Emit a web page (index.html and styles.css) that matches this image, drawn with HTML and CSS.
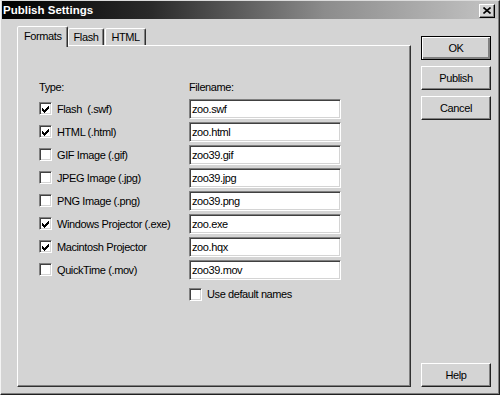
FILE: index.html
```html
<!DOCTYPE html>
<html>
<head>
<meta charset="utf-8">
<title>Publish Settings</title>
<link rel="stylesheet" href="styles.css">
</head>
<body>
<div class="window">
  <div class="titlebar">
    <span class="title">Publish Settings</span>
    <span class="close"><svg width="8" height="7" viewBox="0 0 8 7"><path d="M0.5 0.5 L7.5 6.5 M7.5 0.5 L0.5 6.5" stroke="#000" stroke-width="1.6" fill="none"/></svg></span>
  </div>
  <div class="content">
    <div class="tabs-area">
      <div class="tabstrip">
        <div class="tab active">Formats</div>
        <div class="tab">Flash</div>
        <div class="tab">HTML</div>
      </div>
      <div class="panel">
        <div class="grid">
          <div class="head">Type:</div>
          <div class="head">Filename:</div>

          <div class="opt"><span class="cb checked"></span><span>Flash&nbsp; (.swf)</span></div>
          <div class="field">zoo.swf</div>

          <div class="opt"><span class="cb checked"></span><span>HTML (.html)</span></div>
          <div class="field">zoo.html</div>

          <div class="opt"><span class="cb"></span><span>GIF Image (.gif)</span></div>
          <div class="field">zoo39.gif</div>

          <div class="opt"><span class="cb"></span><span>JPEG Image (.jpg)</span></div>
          <div class="field">zoo39.jpg</div>

          <div class="opt"><span class="cb"></span><span>PNG Image (.png)</span></div>
          <div class="field">zoo39.png</div>

          <div class="opt"><span class="cb checked"></span><span>Windows Projector (.exe)</span></div>
          <div class="field">zoo.exe</div>

          <div class="opt"><span class="cb checked"></span><span>Macintosh Projector</span></div>
          <div class="field">zoo.hqx</div>

          <div class="opt"><span class="cb"></span><span>QuickTime (.mov)</span></div>
          <div class="field">zoo39.mov</div>

          <div class="spacer"></div>
          <div class="opt default-names"><span class="cb"></span><span>Use default names</span></div>
        </div>
      </div>
    </div>
    <div class="buttons">
      <div class="btn default">OK</div>
      <div class="btn">Publish</div>
      <div class="btn">Cancel</div>
      <div class="btn help">Help</div>
    </div>
  </div>
</div>
</body>
</html>
```
FILE: styles.css
```css
* { box-sizing: border-box; }
html, body { margin: 0; padding: 0; background: #d4d4d4; }
body {
  font-family: "Liberation Sans", Arial, sans-serif;
  font-size: 11px;
  letter-spacing: -0.4px;
  color: #000;
}
.window {
  width: 500px;
  height: 395px;
  background: #d4d4d4;
  border: 1px solid;
  border-color: #dcdcdc #202020 #202020 #f4f4f4;
  box-shadow: inset -1px -1px #808080;
  display: flex;
  flex-direction: column;
}
.titlebar {
  height: 18px;
  margin: 0 1px 0 1px;
  background: linear-gradient(to right, #000 0%, #2a2a2a 30%, #8c8c8c 65%, #c4c4c4 100%);
  display: flex;
  align-items: center;
  justify-content: space-between;
  padding: 0 3px 0 1px;
}
.title {
  color: #fff;
  font-weight: bold;
  font-size: 11.5px;
  letter-spacing: 0;
}
.close {
  width: 16px;
  height: 14px;
  background: #d4d4d4;
  border: 1px solid;
  border-color: #fff #000 #000 #fff;
  box-shadow: inset -1px -1px #808080;
  display: flex;
  align-items: center;
  justify-content: center;
  margin-top: 1px;
}
.content {
  flex: 1;
  display: flex;
  padding: 7px 7px 7px 16px;
}
.tabs-area {
  width: 394px;
  display: flex;
  flex-direction: column;
}
.tabstrip {
  display: flex;
  align-items: flex-end;
  height: 19px;
  padding-left: 2px;
  position: relative;
  z-index: 1;
}
.tab {
  height: 17px;
  padding: 2px 5px 0 5px;
  border: 1px solid;
  border-bottom: none;
  border-color: #fff #303030 transparent #fff;
  border-radius: 2px 2px 0 0;
  box-shadow: inset -1px 0 #808080;
  background: #d4d4d4;
  line-height: 13px;
}
.tab.active {
  height: 21px;
  margin: 0 -1px -2px -2px;
  padding: 3px 5px 0 6px;
}
.tab + .tab { margin-left: 1px; }
.tab.active + .tab { margin-left: 1px; }
.panel {
  flex: 1;
  border: 1px solid;
  border-color: #fff #303030 #303030 #fff;
  box-shadow: inset -1px -1px #808080;
  padding: 35px 0 0 21px;
}
.grid {
  display: grid;
  grid-template-columns: 150px 152px;
  grid-template-rows: 16px;
  grid-auto-rows: 23px;
  align-items: center;
}
.head {
  align-self: start;
  line-height: 13px;
  height: 16px;
}
.opt {
  display: flex;
  align-items: center;
  gap: 5px;
  white-space: nowrap;
}
.cb {
  width: 13px;
  height: 13px;
  flex: none;
  background: #fff;
  border: 1px solid;
  border-color: #808080 #fff #fff #808080;
  box-shadow: inset 1px 1px #404040, inset -1px -1px #d4d4d4;
  position: relative;
}
.cb.checked::after {
  content: "";
  position: absolute;
  left: 2px;
  top: 3px;
  width: 7px;
  height: 7px;
  background: url("data:image/svg+xml;utf8,<svg xmlns='http://www.w3.org/2000/svg' width='7' height='7'><path d='M0 2h1v1h1v1h1v-1h1v-1h1v-1h1v-1h1v3h-1v1h-1v1h-1v1h-1v1h-1v-1h-1v-1h-1v-1h-1z' fill='black'/></svg>") no-repeat;
}
.field {
  height: 20px;
  background: #fff;
  border: 1px solid;
  border-color: #808080 #fff #fff #808080;
  box-shadow: inset 1px 1px #404040, inset -1px -1px #d4d4d4;
  padding: 2px 3px 0 2px;
  line-height: 15px;
}
.spacer { height: 1px; }
.default-names {
  margin-top: 3px;
}
.buttons {
  width: 70px;
  margin-left: 10px;
  padding-top: 10px;
  display: flex;
  flex-direction: column;
  gap: 6px;
}
.btn {
  height: 24px;
  border: 1px solid;
  border-color: #fff #202020 #202020 #fff;
  box-shadow: inset -1px -1px #808080;
  display: flex;
  align-items: center;
  justify-content: center;
  background: #d4d4d4;
}
.btn.default {
  border: 1px solid #000;
  box-shadow: inset 1px 1px #fff, inset -2px -2px #808080;
}
.btn.help { margin-top: auto; }
```
